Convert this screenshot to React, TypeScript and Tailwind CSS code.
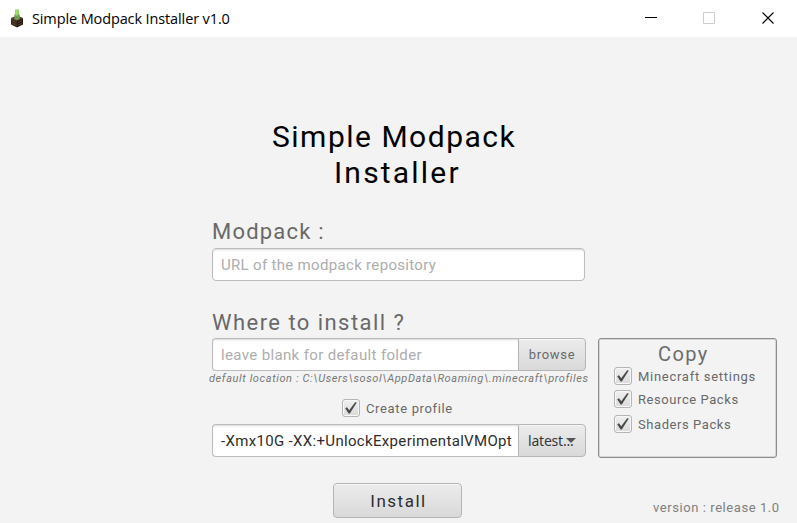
import React from 'react';

function BlockIcon() {
  return (
    <svg width="16" height="20" viewBox="0 0 16 20" className="shrink-0">
      <path d="M6 .5h4v9H6z" fill="#8ccf5c" />
      <path d="M5.3 5.5h5.4v5H5.3z" fill="#6aa045" />
      <path d="M6.5 .5h2v6h-2z" fill="#a6e07c" />
      <path d="M2 9 5.5 7.500v3h5v-3L14 9l-6 3z" fill="#4d3a26" />
      <path d="M2 9 8 11.500v7l-6-3z" fill="#3a2a1b" />
      <path d="M8 11.500l6-2.500V15.500l-6 3z" fill="#281c12" />
      <path d="M3 11.500l4 1.600M3 14l4 1.700M9 13.500l4-1.700M9 16.100l4-1.800" stroke="#5e452c" strokeWidth="0.8" />
    </svg>
  );
}

function CheckBox({ label, className = '', textClass }: { label: string; className?: string; textClass: string }) {
  return (
    <label className={`flex h-[18px] items-center ${className}`}>
      <span className="flex size-[18px] shrink-0 items-center justify-center rounded-[3px] border border-[#b4b4b4] bg-linear-to-b from-[#f0f0f0] to-[#dadada] shadow-[inset_0_0_0_1px_#f8f8f8]">
        <svg width="14" height="14" viewBox="0 0 14 14" className="shrink-0">
          <path d="M1.2 7.2 3 6.2 5.2 9.2 11.2 1.2 12.8 1.4 5.8 12.6 4.6 12.6Z" fill="#484848" />
        </svg>
      </span>
      <span className={`ml-[6px] pt-[2px] whitespace-nowrap text-[13px] leading-[18px] text-[#696969] ${textClass}`}>{label}</span>
    </label>
  );
}

const field =
  'flex h-[33px] items-center overflow-hidden border border-[#bcbcbc] bg-white pl-[8px] pt-[1px] text-[15px] whitespace-nowrap shadow-[inset_0_2px_2px_-1px_#d8d8d8]';
const button =
  'flex h-[33px] items-center border border-[#b5b5b5] bg-linear-to-b from-[#ececec] to-[#d9d9d9] shadow-[inset_0_1px_0_#f7f7f7]';

export default function App() {
  return (
    <div className="flex h-[523px] w-[797px] flex-col overflow-hidden bg-[#f3f3f3] font-[Roboto,sans-serif]">
      <header className="flex h-[37px] shrink-0 items-center bg-white pl-[9px]">
        <BlockIcon />
        <span className="ml-[7px] font-['Open_Sans',sans-serif] text-[14.5px] tracking-[-0.12px] text-black">
          Simple Modpack Installer v1.0
        </span>
        <svg className="ml-auto" width="152" height="37" viewBox="0 0 152 37" fill="none">
          <path d="M0 17.500h12" stroke="#000" />
          <path d="M58.500 12.500h11v11h-11z" stroke="#ccc" />
          <path d="M117.500 12.500l11 11M128.500 12.500l-11 11" stroke="#000" strokeWidth="1.1" />
        </svg>
      </header>

      <h1 className="mt-[82px] ml-[272px] flex w-[250px] flex-col text-[30px] leading-[36px] whitespace-nowrap text-black">
        <span className="tracking-[1.5px]">Simple Modpack</span>
        <span className="ml-[62px] tracking-[2.2px]">Installer</span>
      </h1>

      <section className="mt-[27px] ml-[212px] w-[373px]">
        <h2 className="h-[30px] text-[22px] leading-[28px] tracking-[1.2px] text-[#696969]">Modpack :</h2>
        <div className={`${field} rounded-[4px] tracking-[0.32px] text-[#adadad]`}>URL of the modpack repository</div>
      </section>

      <div className="mt-[28px] ml-[212px] flex">
        <section className="w-[374px]">
          <h2 className="h-[29px] text-[22px] leading-[28px] tracking-[1.45px] whitespace-nowrap text-[#696969]">
            Where to install ?
          </h2>
          <div className="flex">
            <div className={`${field} w-[306px] rounded-l-[4px] border-r-0 tracking-[0.36px] text-[#adadad]`}>
              leave blank for default folder
            </div>
            <div className={`${button} w-[68px] justify-center rounded-r-[4px] text-[13px] tracking-[0.7px] text-[#696969]`}>
              browse
            </div>
          </div>
          <p className="-ml-[3px] h-[14px] text-[11px] leading-[16px] tracking-[0.6px] whitespace-nowrap text-[#777] italic">
            default location : C:\Users\sosol\AppData\Roaming\.minecraft\profiles
          </p>
          <CheckBox label="Create profile" className="mt-[14px] ml-[130px]" textClass="tracking-[0.65px]" />
          <div className="mt-[7px] flex">
            <div className={`${field} w-[306px] rounded-l-[4px] border-r-0 pr-[6px] text-[#2d2d2d]`}>
              <span className="tracking-[0.33px]">-Xmx10G -XX:+UnlockExperimentalVMOpt</span>
            </div>
            <div className={`${button} relative w-[68px] rounded-r-[4px] pl-[9px] text-[#383838]`}>
              <span className="font-['Noto_Sans',sans-serif] text-[14px] tracking-[-0.2px]">latest...</span>
              <svg className="absolute top-[13px] left-[47px]" width="10" height="5" viewBox="0 0 10 5">
                <path d="M0 0h10L5 5z" fill="#555" />
              </svg>
            </div>
          </div>
        </section>

        <aside className="mt-[29px] ml-[12px] h-[120px] w-[179px] rounded-[3px] border border-[#8c8c8c] pl-[15px] shadow-[inset_0_0_0_1px_#d6d6d6]">
          <h3 className="h-[27px] pl-[44px] text-[20px] leading-[30px] tracking-[1.4px] text-[#6c6c6c]">Copy</h3>
          <CheckBox label="Minecraft settings" className="mt-[1px]" textClass="tracking-[0.72px]" />
          <CheckBox label="Resource Packs" className="mt-[5px]" textClass="tracking-[0.57px]" />
          <CheckBox label="Shaders Packs" className="mt-[7px]" textClass="tracking-[0.57px]" />
        </aside>
      </div>

      <footer className="mt-[25px] flex">
        <div className={`${button} ml-[333px] h-[35px] w-[129px] justify-center rounded-[4px] pt-[2px] pl-[2px] text-[17px] tracking-[1.5px] text-[#2e2e2e]`}>
          Install
        </div>
        <span className="mt-[16px] ml-[191px] text-[13px] leading-[18px] tracking-[0.57px] whitespace-nowrap text-[#808080]">
          version : release 1.0
        </span>
      </footer>
    </div>
  );
}
